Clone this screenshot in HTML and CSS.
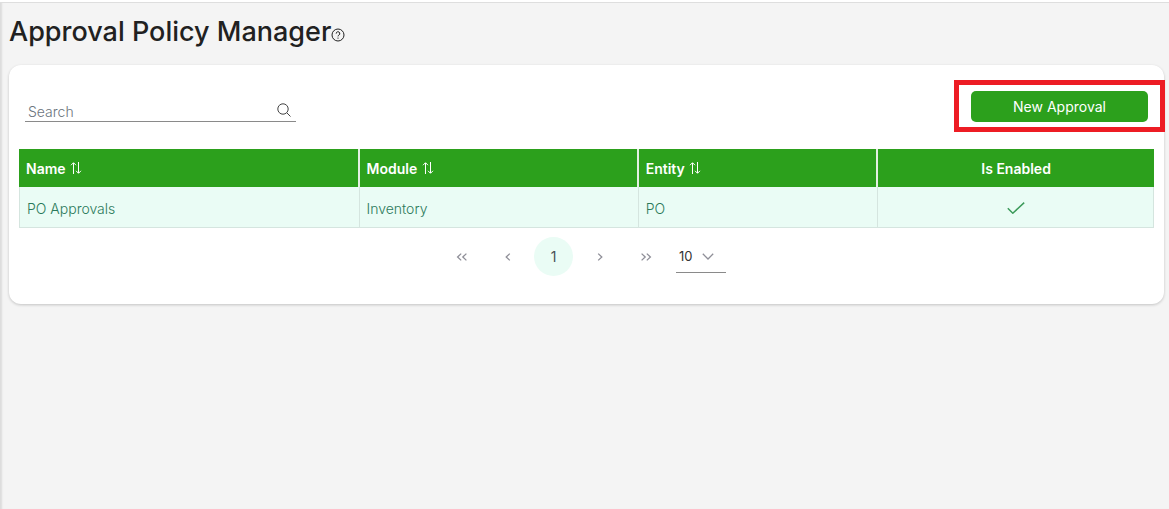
FILE: index.html
```html
<!DOCTYPE html>
<html lang="en">
<head>
  <meta charset="UTF-8" />
  <meta name="viewport" content="width=device-width, initial-scale=1.0" />
  <title>Approval Policy Manager</title>
  <link rel="stylesheet" href="styles.css">
</head>
<body>
  <div class="topbar"></div>
  <main class="page">
    <header class="page-title">
      <h1>Approval Policy Manager</h1>
      <a class="help" href="#" aria-label="Help">
        <svg viewBox="0 0 14 14" width="14" height="14" fill="none" stroke="currentColor">
          <circle cx="7" cy="7" r="6" />
          <path d="M5.2 5.6a1.8 1.8 0 1 1 2.7 1.5C7.2 7.5 7 7.8 7 8.4" />
          <path d="M7 9.6v1.1" />
        </svg>
      </a>
    </header>

    <section class="card">
      <div class="toolbar">
        <div class="search">
          <input type="text" id="search" placeholder="Search" aria-label="Search" />
          <svg viewBox="0 0 14 14" width="14" height="14" fill="none" stroke="currentColor">
            <circle cx="6" cy="6" r="5.2" />
            <path d="M9.8 9.8l3.7 3.7" />
          </svg>
        </div>
        <div class="highlight">
          <button class="btn-new" type="button">New Approval</button>
        </div>
      </div>

      <table class="grid">
        <colgroup>
          <col class="col-name" />
          <col class="col-module" />
          <col class="col-entity" />
          <col />
        </colgroup>
        <thead>
          <tr>
            <th>Name
              <svg class="sort" viewBox="0 0 12 12" width="12" height="12" fill="none" stroke="currentColor">
                <path d="M3.5 12V1M1 3.2L3.5.7 6 3.2M8.5 0v11M6 8.8l2.5 2.5L11 8.8" />
              </svg>
            </th>
            <th>Module
              <svg class="sort" viewBox="0 0 12 12" width="12" height="12" fill="none" stroke="currentColor">
                <path d="M3.5 12V1M1 3.2L3.5.7 6 3.2M8.5 0v11M6 8.8l2.5 2.5L11 8.8" />
              </svg>
            </th>
            <th>Entity
              <svg class="sort" viewBox="0 0 12 12" width="12" height="12" fill="none" stroke="currentColor">
                <path d="M3.5 12V1M1 3.2L3.5.7 6 3.2M8.5 0v11M6 8.8l2.5 2.5L11 8.8" />
              </svg>
            </th>
            <th class="center">Is Enabled</th>
          </tr>
        </thead>
        <tbody>
          <tr>
            <td>PO Approvals</td>
            <td>Inventory</td>
            <td>PO</td>
            <td class="center">
              <svg class="check" viewBox="0 0 18 12" width="18" height="12" fill="none" stroke="currentColor" role="img" aria-label="Enabled">
                <path d="M.8 6.2l5 5L17.2.6" />
              </svg>
            </td>
          </tr>
        </tbody>
      </table>

      <nav class="pager" aria-label="Pages">
        <button type="button" aria-label="First page">
          <svg viewBox="0 0 12 8" width="12" height="8"><path d="M5.2.6L1.6 4l3.6 3.4M10.4.6L6.8 4l3.6 3.4" /></svg>
        </button>
        <button type="button" aria-label="Previous page">
          <svg viewBox="0 0 6 8" width="6" height="8"><path d="M4.8.6L1.2 4l3.6 3.4" /></svg>
        </button>
        <button type="button" class="active">1</button>
        <button type="button" aria-label="Next page">
          <svg viewBox="0 0 6 8" width="6" height="8"><path d="M1.2.6L4.8 4 1.2 7.4" /></svg>
        </button>
        <button type="button" aria-label="Last page">
          <svg viewBox="0 0 12 8" width="12" height="8"><path d="M1.6.6L5.2 4 1.6 7.4M6.8.6L10.4 4 6.8 7.4" /></svg>
        </button>
        <div class="rows">
          <select id="rows" aria-label="Rows per page">
            <option>10</option>
            <option>25</option>
            <option>50</option>
          </select>
          <svg viewBox="0 0 12 7" width="12" height="7"><path d="M.8.8L6 6 11.2.8" /></svg>
        </div>
      </nav>
    </section>
  </main>
</body>
</html>
```

FILE: styles.css
```css
* {
  box-sizing: border-box;
}
body {
  margin: 0;
  min-height: 100vh;
  background: #f4f4f4;
  box-shadow: inset 3px 0 2px -1px #dcdcdc;
  font-family: Inter, sans-serif;
  font-size: 14px;
  color: #212121;
}
button, input, select {
  font-family: inherit;
  font-size: inherit;
}
svg {
  display: block;
}
.topbar {
  height: 3px;
  background: #fff;
  border-bottom: 1px solid #dedede;
}
.page {
  padding: 9px 5px 0 9px;
}
.page-title {
  display: flex;
  align-items: center;
  height: 40px;
}
.page-title h1 {
  margin: 0;
  font-size: 27px;
  font-weight: 500;
  line-height: 40px;
}
.help {
  padding-top: 6px;
  color: #212121;
}
.card {
  margin-top: 13px;
  padding: 26px 10px 28px;
  background: #fff;
  border-radius: 12px;
  box-shadow: 0 1px 3px rgba(0, 0, 0, 0.2);
}
.toolbar {
  display: flex;
  justify-content: space-between;
  padding: 0 6px;
}
.search {
  display: flex;
  align-items: center;
  width: 271px;
  height: 31px;
  padding: 0 5px 0 3px;
  border-bottom: 1px solid #8a8a8a;
  color: #444;
}
.search input {
  flex: 1;
  min-width: 0;
  height: 20px;
  margin-top: 10px;
  padding: 0;
  border: 0;
  outline: 0;
  background: none;
  font-weight: 300;
}
.search svg {
  margin-top: 8px;
}
.search input::placeholder {
  color: #6c757d;
}
.highlight {
  position: relative;
}
.highlight::after {
  content: "";
  position: absolute;
  inset: -11px -17px -10px;
  border: 5px solid #ed1c24;
  pointer-events: none;
}
.btn-new {
  width: 177px;
  height: 31px;
  border: 0;
  border-radius: 5px;
  background: #2ca01c;
  color: #fff;
  cursor: pointer;
}
.grid {
  width: 100%;
  margin-top: 27px;
  border-collapse: separate;
  border-spacing: 0;
  table-layout: fixed;
}
.col-name {
  width: 30%;
}
.col-module {
  width: 24.6%;
}
.col-entity {
  width: 21.1%;
}
.grid th {
  height: 38px;
  padding: 0 7px;
  background: #2ca01c;
  border-right: 2px solid #e4efe2;
  color: #fff;
  font-weight: 600;
  text-align: left;
}
.grid th:last-child {
  border-right: 0;
}
.grid td {
  height: 41px;
  padding: 2px 7px 0;
  background: #eafcf5;
  border-right: 1px solid #d5e5df;
  border-bottom: 1px solid #d5e5df;
  color: #2a7a5a;
  font-weight: 300;
}
.grid td:first-child {
  border-left: 1px solid #d5e5df;
}
.grid .center {
  text-align: center;
}
.sort {
  display: inline-block;
  margin-left: 1px;
}
.check {
  display: inline-block;
  color: #3c9a5a;
  stroke-width: 1.5;
}
.pager {
  display: flex;
  justify-content: center;
  align-items: center;
  gap: 7px;
  margin-top: 9px;
  padding-right: 5px;
}
.pager button {
  display: flex;
  justify-content: center;
  align-items: center;
  width: 39px;
  height: 39px;
  padding: 0;
  border: 0;
  border-radius: 50%;
  background: none;
  color: #495057;
}
.pager .active {
  background: #eafcf5;
}
.pager svg {
  fill: none;
  stroke: #8f8f98;
  stroke-width: 1.3;
}
.rows {
  position: relative;
  width: 50px;
  margin-left: 4px;
}
.rows select {
  width: 100%;
  height: 33px;
  padding: 0 0 0 3px;
  border: 0;
  border-bottom: 1px solid #8a8a8a;
  background: none;
  color: #333;
  font-size: 13px;
  appearance: none;
}
.rows svg {
  position: absolute;
  top: 13px;
  right: 12px;
  pointer-events: none;
}
```
